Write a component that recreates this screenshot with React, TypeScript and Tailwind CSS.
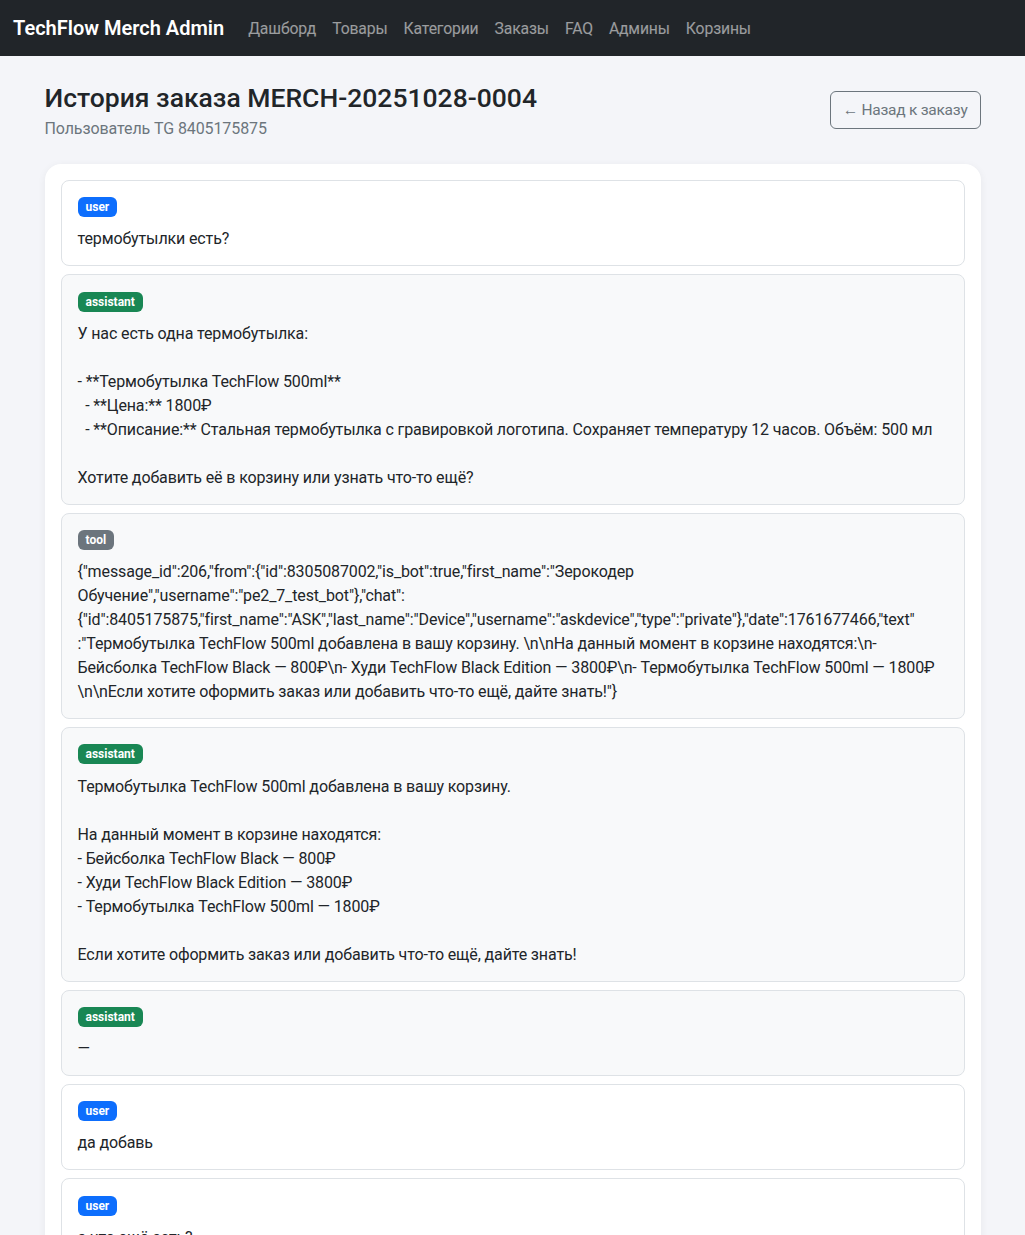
import React from "react";

type Role = "user" | "assistant" | "tool";

interface HistoryMessage {
  id: number;
  role: Role;
  text: string;
}

const navLinks = ["Дашборд", "Товары", "Категории", "Заказы", "FAQ", "Админы", "Корзины"];

const roleStyles: Record<Role, { badge: string; box: string }> = {
  user: { badge: "bg-[#0d6efd]", box: "bg-white" },
  assistant: { badge: "bg-[#198754]", box: "bg-[#f8f9fa]" },
  tool: { badge: "bg-[#6c757d]", box: "bg-[#f8f9fa]" },
};

// tool payload is shown raw, lines broken where the original wraps
const toolPayload = [
  '{"message_id":206,"from":{"id":8305087002,"is_bot":true,"first_name":"Зерокодер',
  'Обучение","username":"pe2_7_test_bot"},"chat":',
  '{"id":8405175875,"first_name":"ASK","last_name":"Device","username":"askdevice","type":"private"},"date":1761677466,"text"',
  ':"Термобутылка TechFlow 500ml добавлена в вашу корзину. \\n\\nНа данный момент в корзине находятся:\\n-',
  "Бейсболка TechFlow Black — 800₽\\n- Худи TechFlow Black Edition — 3800₽\\n- Термобутылка TechFlow 500ml — 1800₽",
  '\\n\\nЕсли хотите оформить заказ или добавить что-то ещё, дайте знать!"}',
].join("\n");

const messages: HistoryMessage[] = [
  { id: 1, role: "user", text: "термобутылки есть?" },
  {
    id: 2,
    role: "assistant",
    text: [
      "У нас есть одна термобутылка:",
      "",
      "- **Термобутылка TechFlow 500ml**",
      "  - **Цена:** 1800₽",
      "  - **Описание:** Стальная термобутылка с гравировкой логотипа. Сохраняет температуру 12 часов. Объём: 500 мл",
      "",
      "Хотите добавить её в корзину или узнать что-то ещё?",
    ].join("\n"),
  },
  { id: 3, role: "tool", text: toolPayload },
  {
    id: 4,
    role: "assistant",
    text: [
      "Термобутылка TechFlow 500ml добавлена в вашу корзину.",
      "",
      "На данный момент в корзине находятся:",
      "- Бейсболка TechFlow Black — 800₽",
      "- Худи TechFlow Black Edition — 3800₽",
      "- Термобутылка TechFlow 500ml — 1800₽",
      "",
      "Если хотите оформить заказ или добавить что-то ещё, дайте знать!",
    ].join("\n"),
  },
  { id: 5, role: "assistant", text: "—" },
  { id: 6, role: "user", text: "да добавь" },
  { id: 7, role: "user", text: "а что ещё есть?" },
];

function RoleBadge({ role }: { role: Role }) {
  return (
    <span
      className={`inline-block rounded-[6px] px-[8px] py-[4px] text-[12px] font-bold leading-none text-white ${roleStyles[role].badge}`}
    >
      {role}
    </span>
  );
}

function MessageCard({ message }: { message: HistoryMessage }) {
  return (
    <div className={`rounded-[8px] border border-[#dee2e6] px-4 pt-4 pb-[14px] ${roleStyles[message.role].box}`}>
      <div className="mb-[10px] flex h-[20.4px] items-center">
        <RoleBadge role={message.role} />
      </div>
      <div className="whitespace-pre-wrap break-words text-[16px] leading-6 tracking-[-0.13px] text-[#212529]">
        {message.text}
      </div>
    </div>
  );
}

export default function App() {
  return (
    <div className="min-h-[1235px] bg-[#f4f5f9] font-['Roboto','Liberation_Sans',sans-serif] text-[#212529]">
      <nav className="flex h-14 items-center bg-[#212529] px-[13px]">
        <span className="mr-4 text-[20px] font-semibold text-white">TechFlow Merch Admin</span>
        <div className="flex items-center">
          {navLinks.map((link) => (
            <a
              key={link}
              href="#"
              className="px-2 pt-[9px] pb-[7px] text-[15.75px] leading-6 tracking-[-0.15px] text-white/55"
            >
              {link}
            </a>
          ))}
        </div>
      </nav>

      <main className="mx-auto w-[960px] px-3 pt-6">
        <div className="mb-6 flex items-center justify-between">
          <div>
            <h3 className="mt-[2px] mb-[2px] text-[26.5px] font-medium leading-[32px]">
              История заказа MERCH-20251028-0004
            </h3>
            <p className="pt-[1px] text-[16px] leading-[23px] tracking-[-0.1px] text-[#6c757d]">
              Пользователь TG 8405175875
            </p>
          </div>
          <button
            type="button"
            className="rounded-[6px] border border-[#6c757d] px-3 py-[6px] text-[15.5px] leading-6 tracking-[-0.25px] text-[#6c757d]"
          >
            ← Назад к заказу
          </button>
        </div>

        <div className="flex flex-col gap-2 rounded-2xl bg-white p-4 shadow-[0_2px_8px_rgba(0,0,0,0.06)]">
          {messages.map((message) => (
            <MessageCard key={message.id} message={message} />
          ))}
        </div>
      </main>
    </div>
  );
}
